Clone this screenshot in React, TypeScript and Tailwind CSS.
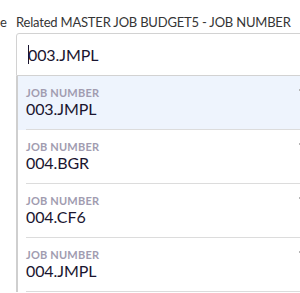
const jobs = ['003.JMPL', '004.BGR', '004.CF6', '004.JMPL'];

export default function App() {
  return (
    <div className="w-[300px] h-[293px] overflow-hidden bg-white font-['Lato',sans-serif]">
      <div className="flex items-end h-[33px] pb-[2px] text-[13px] leading-[17px] tracking-[-0.2px] text-[#353535] whitespace-nowrap">
        <span className="w-[16px] shrink-0">e</span>
        <span className="shrink-0">Related MASTER JOB BUDGET5 - JOB NUMBER</span>
      </div>
      <div className="ml-[16px] w-[300px]">
        <div className="h-[43px] flex items-center pl-[11px] border border-[#d2d2d2] rounded-tl-[3px]">
          <span className="w-[1px] h-[19px] bg-[#1a1530] -mr-[1px]" />
          <span className="text-[16px] leading-[20px] tracking-[-0.1px] text-[#1a1530]">003.JMPL</span>
        </div>
        <div className="border-l-2 border-[#cfcfcf]">
          {jobs.map((job, i) => (
            <div key={job} className={`pl-[8px] ${i === 0 ? 'bg-[#eef4fd]' : 'bg-white'}`}>
              <div className="flex justify-between w-[274px] pt-[10px] pb-[10px] border-b border-[#dcdcdc]">
                <div>
                  <div className="text-[11px] leading-[13px] font-bold tracking-[0.2px] text-[#a19cb0]">JOB NUMBER</div>
                  <div className="text-[16px] leading-[20px] tracking-[-0.1px] text-[#1a1530]">{job}</div>
                </div>
                <span className="w-[1px] h-[2px] mt-[3px] bg-[#b5b5b5]" />
              </div>
            </div>
          ))}
        </div>
      </div>
    </div>
  );
}
